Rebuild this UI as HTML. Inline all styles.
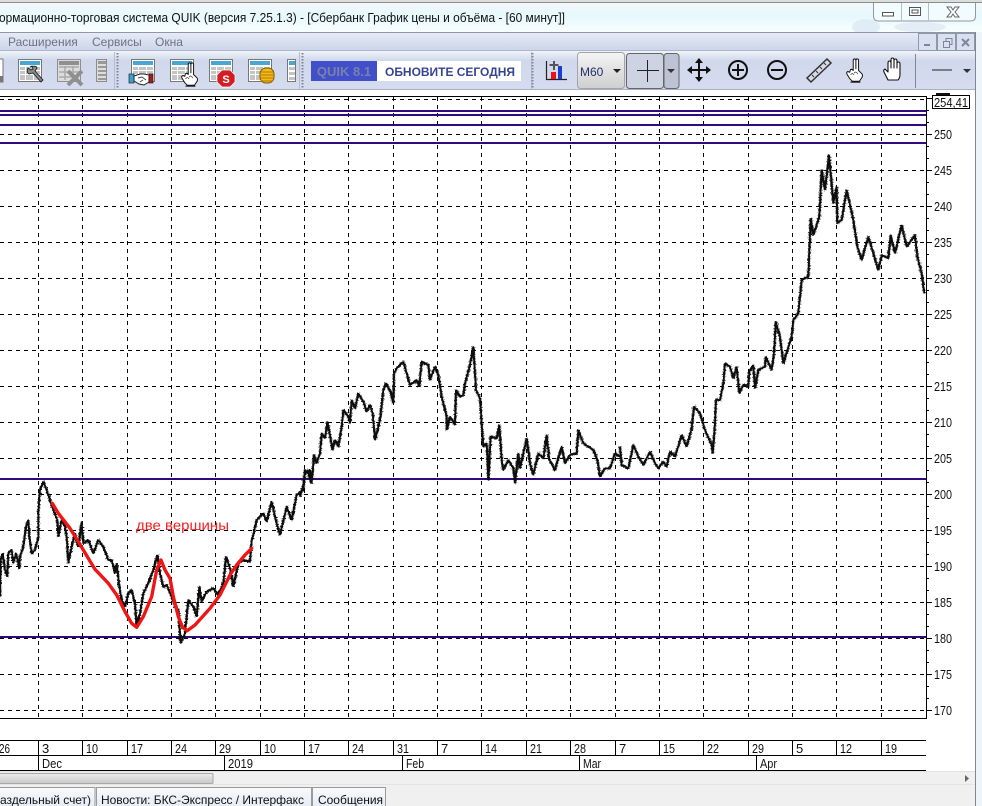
<!DOCTYPE html>
<html><head><meta charset="utf-8"><style>
html,body{margin:0;padding:0;background:#fff;overflow:hidden}
svg{display:block;font-family:"Liberation Sans",sans-serif}
.ax{font-size:13px;fill:#111}
</style></head><body>
<svg width="982" height="806" viewBox="0 0 982 806" xmlns="http://www.w3.org/2000/svg">
<defs>
<linearGradient id="tb" x1="0" y1="0" x2="0" y2="1"><stop offset="0" stop-color="#f4f8fb"/><stop offset=".5" stop-color="#e6f8fc"/><stop offset="1" stop-color="#fbfeff"/></linearGradient>
<linearGradient id="mn" x1="0" y1="0" x2="0" y2="1"><stop offset="0" stop-color="#e6ebf5"/><stop offset="1" stop-color="#ccd5ea"/></linearGradient>
<linearGradient id="tl" x1="0" y1="0" x2="0" y2="1"><stop offset="0" stop-color="#f0f3f9"/><stop offset=".25" stop-color="#d0d8ec"/><stop offset="1" stop-color="#d6dcee"/></linearGradient>
<linearGradient id="bt" x1="0" y1="0" x2="0" y2="1"><stop offset="0" stop-color="#f4f4f4"/><stop offset="1" stop-color="#cfcfcf"/></linearGradient>
<linearGradient id="sc" x1="0" y1="0" x2="0" y2="1"><stop offset="0" stop-color="#ececec"/><stop offset="1" stop-color="#c8c8c8"/></linearGradient>
<linearGradient id="tab" x1="0" y1="0" x2="0" y2="1"><stop offset="0" stop-color="#fafafa"/><stop offset="1" stop-color="#e4ecf6"/></linearGradient>
<filter id="rough" x="-2%" y="-2%" width="104%" height="104%" filterUnits="objectBoundingBox"><feTurbulence type="fractalNoise" baseFrequency="0.7" numOctaves="2" seed="7" result="n"/><feDisplacementMap in="SourceGraphic" in2="n" scale="4" xChannelSelector="R" yChannelSelector="G"/></filter>
<symbol id="tbl" viewBox="0 0 24 24" width="24" height="24"><rect x=".5" y=".5" width="23" height="22" fill="#fff" stroke="#777"/><rect x="2" y="2" width="20" height="4" fill="#4aa6d2"/><path d="M2 8h5v3H2zM8 8h7v3H8zM16 8h6v3h-6zM2 12h5v3H2zM8 12h7v3H8zM16 12h6v3h-6zM2 16h5v5H2zM8 16h7v5H8zM16 16h6v5h-6z" fill="#c4c4c4"/></symbol>
<symbol id="hand2" viewBox="0 0 20 28"><path d="M8 14V3q0-2 1.500-2T11 3v9V3q0-2 1.500-2T14 3v11l4 4q1 3-1 5l-2 3H7l-3-3-3-5q-1-2 1-3l2 1 1-3q2-1 3 1z" fill="#fff" stroke="#111" stroke-width="1.100" stroke-linejoin="round"/><path d="M5 19q2-3 4 0M9 17q2-3 4 1" stroke="#333" stroke-width=".8" fill="none"/><path d="M5 27h11" stroke="#111" stroke-width="1.300"/></symbol>
<g id="price">
<polyline transform="translate(0 470) scale(.33333)" points="0,380 2,270 8,250 15,300 22,320 25,250 35,240 40,280 48,250 58,295 60,260 70,230 78,170 85,150 88,200 95,250 105,240 115,200 115,125 120,60 130,35 140,60 150,90 160,120 172,150 175,200 185,150 195,170 200,200 205,280 215,230 225,190 235,230 245,155 250,220 265,210 280,250 295,210 310,230 325,270 335,270 345,310 350,280 358,350 365,390 375,410 385,370 395,360 405,400 410,470 420,430 430,370 445,340 460,300 472,255 480,310 490,350 500,345 515,380 525,410 535,420 542,520 555,490 565,390 580,410 590,440 598,350 605,395 620,365 640,355 655,375 670,340 678,260 690,295 700,350 715,280 730,270 750,275 755,215 770,150 790,130 800,155 815,95 830,160 840,195 860,110 875,150 890,75 910,60 915,10 930,0 935,40"/>
<polyline transform="translate(300 340) scale(.33333)" points="0,470 10,435 15,390 25,400 35,430 38,395 42,345 50,370 60,340 65,280 75,295 82,245 90,285 97,330 105,300 115,320 125,260 130,210 145,230 150,250 155,180 165,205 175,160 190,185 200,215 210,195 218,220 225,300 240,240 250,150 258,130 272,155 280,190 282,100 290,85 310,65 320,100 330,135 350,120 358,140 365,65 385,75 390,120 405,80 415,105 425,170 440,230 440,270 450,230 465,255 468,150 480,170 490,165 495,130 510,75 520,20 528,150 540,175 545,250 550,320 560,310 565,420 572,290 590,295 598,255 605,360 610,390 625,360 640,385 645,430 655,340 660,385 680,295 690,370 700,405 715,340 730,355 740,285 748,360 765,390 785,320 795,370 810,345 830,340 835,270 850,310 880,330 892,360 900,410 915,385 930,385 945,340 960,350"/>
<polyline transform="translate(620 140) scale(.33333)" points="0,920 5,975 25,985 40,915 55,950 70,975 90,935 105,970 115,985 130,965 140,980 150,935 165,950 185,885 200,920 215,865 222,800 240,820 255,870 275,915 278,940 285,850 288,780 300,780 310,730 315,670 330,680 340,715 350,680 358,760 370,735 385,740 388,695 400,675 405,745 415,690 435,680 437,650 455,690 460,655 463,625 467,545 480,590 490,670 515,590 520,540 535,520 545,420 565,410 572,235 580,285 598,230 605,90 615,150 627,45 640,190 650,140 652,250 665,240 680,150 700,240 712,320 725,360 745,290 760,340 775,390 785,345 805,355 812,285 825,340 845,255 860,320 885,285 892,350 905,400 913,460"/>
</g>
</defs>

<!-- title -->
<rect width="982" height="33" fill="url(#tb)"/>
<rect width="982" height="2" fill="#dcdcdc"/><rect y="2" width="982" height="1" fill="#8c8c8c"/>
<ellipse cx="866" cy="27" rx="14" ry="8" fill="#e0edf6"/><ellipse cx="920" cy="27" rx="26" ry="5" fill="#e2edf6"/>
<text x="-1" y="22" font-size="12.5" fill="#111" textLength="566" lengthAdjust="spacingAndGlyphs">ормационно-торговая система QUIK (версия 7.25.1.3) - [Сбербанк График цены и объёма - [60 минут]]</text>
<path d="M873.5 3v13q0 5 5 5h92q5 0 5-5V3" fill="#f2fbfe" stroke="#8f9aa4"/>
<path d="M901.5 3v18M928.5 3v18" stroke="#b4c0c8"/>
<rect x="882.5" y="12.500" width="11" height="3.500" fill="#fff" stroke="#555"/>
<rect x="909.5" y="7.500" width="11" height="8" fill="#fff" stroke="#555"/><rect x="912" y="10" width="6" height="3" fill="none" stroke="#555"/>
<path d="M947 7l4 0 2 3 2-3 4 0-4 5 4 5-4 0-2-3-2 3-4 0 4-5z" fill="#fff" stroke="#666"/>

<!-- right side outer frame -->
<rect x="975" y="32" width="7" height="774" fill="#eef5fa"/>
<rect y="32" width="975" height="1" fill="#8d97a6"/>
<rect x="975" y="32" width="1" height="774" fill="#7f8790"/>

<!-- menu -->
<rect y="33" width="975" height="17" fill="url(#mn)"/>
<rect y="50" width="975" height="1" fill="#aeb7c9"/>
<g font-size="12" fill="#6e7180"><text x="8" y="46">Расширения</text><text x="92" y="46">Сервисы</text><text x="155" y="46">Окна</text></g>
<g fill="#d9e1f1" stroke="#8f9aa8"><rect x="918.500" y="33.500" width="18" height="17"/><rect x="937.500" y="33.500" width="18" height="17"/><rect x="956.500" y="33.500" width="18" height="17"/></g>
<path d="M924 45h6" stroke="#7b8798" stroke-width="2"/>
<path d="M943.500 41.500h6v6h-6zM946 41v-2.500h6v6h-2" fill="none" stroke="#7b8798"/>
<path d="M962 39l7 7M969 39l-7 7" stroke="#7b8798" stroke-width="2"/>

<!-- toolbar -->
<rect y="51" width="975" height="38" fill="url(#tl)"/>
<rect y="89" width="975" height="1" fill="#a9b1c4"/>
<rect y="90" width="975" height="681" fill="#fff"/>
<path d="M114.500 52v37M299.500 52v37M531.500 52v37" stroke="#b6bdcf"/>
<path d="M117.500 53v36M302.500 53v36M532.500 53v36" stroke="#7e8796" stroke-dasharray="1.500 1.500" stroke-width="2"/>

<rect x="-21" y="59" width="24" height="23" fill="#fff" stroke="#777"/><rect x="-2" y="76" width="5" height="6" fill="#777"/>
<use href="#tbl" x="18" y="59"/>
<path d="M30 67q6-2 7 1l-2 3 8 9-2 2-8-9-4 1q-3-2-1-6l3 2 2-1-1-3z" fill="#8c8c8c" stroke="#222" stroke-width=".9"/>
<g opacity=".95"><rect x="57.500" y="59.500" width="23" height="22" fill="#ddd" stroke="#8c8c8c"/><rect x="59" y="61" width="20" height="4" fill="#8c8c8c"/><path d="M59 67h20M59 72h20M59 77h20M65 66v14M73 66v14" stroke="#a8a8a8" stroke-width="1.500"/><path d="M68 71l14 14M82 71L68 85" stroke="#8c8c8c" stroke-width="4"/></g>
<rect x="96.500" y="59.500" width="10" height="22" fill="#ddd" stroke="#8c8c8c"/><path d="M98 61h8v3h-8zM98 66h8v2h-8zM98 70h8v2h-8zM98 74h8v2h-8zM98 78h8v2h-8z" fill="#999"/>

<use href="#tbl" x="131" y="59"/>
<rect x="129" y="74" width="5" height="9" fill="#3d9fd0" stroke="#222" stroke-width=".7"/><rect x="149" y="74" width="4" height="9" fill="#b01818" stroke="#222" stroke-width=".7"/>
<path d="M134 76l6-2 4 0 5 1v7l-5 3-5-1-5-3z" fill="#fff" stroke="#222"/><path d="M138 78l4-1 4 3M140 82l3-2" stroke="#444" fill="none"/>
<use href="#tbl" x="170" y="59"/>
<use href="#hand2" x="181" y="62" width="18" height="25"/>
<use href="#tbl" x="209" y="59"/>
<path d="M222 70h8l5 5v7l-5 5h-8l-5-5v-7z" fill="#d51c22" stroke="#fff" stroke-width=".7"/><text x="226" y="83" font-size="11" font-weight="bold" fill="#fff" text-anchor="middle">S</text>
<use href="#tbl" x="248" y="59"/>
<rect x="260" y="68" width="14" height="15" rx="6" fill="#f3b918" stroke="#7a5a06"/><path d="M261 72h12M260 75h14M260 78h14M261 81h12" stroke="#b07c00"/>
<rect x="287.500" y="59.500" width="8" height="22" fill="#fff" stroke="#777"/><rect x="289" y="61" width="6" height="4" fill="#4aa6d2"/><path d="M289 67h6v3h-6zM289 72h6v3h-6zM289 77h6v3h-6z" fill="#c4c4c4"/>

<rect x="311" y="61" width="66" height="20" fill="#4150c9"/>
<text x="344" y="76" font-size="13" font-weight="bold" fill="#7b7fae" text-anchor="middle">QUIK 8.1</text>
<rect x="377" y="61" width="144" height="20" fill="#fff"/>
<text x="385" y="76" font-size="12" font-weight="bold" fill="#36458f" textLength="130" lengthAdjust="spacingAndGlyphs">ОБНОВИТЕ СЕГОДНЯ</text>

<path d="M546.500 61v18.500H567" stroke="#222" fill="none" stroke-width="1.200"/>
<rect x="551" y="72" width="5" height="7" fill="#e11"/><rect x="558" y="66" width="4" height="13" fill="#1a3fd0"/>
<path d="M554 61v9M549.500 65h9" stroke="#555" stroke-width="2"/>
<rect x="577.500" y="52.500" width="47" height="36" rx="3" fill="url(#bt)" stroke="#a4a4a4"/>
<text x="580" y="76" font-size="12" fill="#24306e">M60</text>
<path d="M613 69h8l-4 4z" fill="#222"/>
<rect x="626.500" y="53.500" width="37" height="35" rx="3" fill="#cdd3e2" stroke="#666"/>
<rect x="664" y="53.500" width="15" height="35" rx="3" fill="#bcc3d4" stroke="#666"/>
<path d="M647.500 60v22M637 70.500h22" stroke="#222"/>
<path d="M667 69h8l-4 4z" fill="#333"/>
<g fill="#111" stroke="none"><path d="M699 58l4 5h-3v6h6v-3l5 4-5 4v-3h-6v6h3l-4 5-4-5h3v-6h-6v3l-5-4 5-4v3h6v-6h-3z"/></g>
<g fill="none" stroke="#111" stroke-width="2"><circle cx="738" cy="70" r="9"/><path d="M732 70h12M738 64v12"/><circle cx="777" cy="70" r="9"/><path d="M771 70h12"/></g>
<path d="M807 78l20-19 4 4-20 19z" fill="#d6dae6" stroke="#333" stroke-width="1.500"/>
<path d="M812 75l2 2M816 71l2 2M820 67l2 2M824 63l2 2" stroke="#333"/>
<use href="#hand2" x="846" y="58" width="18" height="25"/>
<path d="M888 80l-4-8q-1-2 1-3l3 3v-9q0-2 1.500-2t1.500 2v5-8q0-2 1.500-2t1.500 2v8-7q0-2 1.500-2t1.500 2v7-4q0-2 1.500-2t1.500 2v10q0 4-2 6z" fill="#fff" stroke="#111" stroke-width="1.100" stroke-linejoin="round"/>
<path d="M915.500 54v34" stroke="#7e8796"/>
<path d="M932 70h20" stroke="#222"/>
<path d="M963 69h8l-4 4z" fill="#333"/>

<!-- chart grid -->
<g stroke="#000" stroke-dasharray="4 4" shape-rendering="crispEdges" fill="none">
<path d="M0 99.500H926M0 134.500H926M0 170.500H926M0 206.500H926M0 242.500H926M0 278.500H926M0 314.500H926M0 350.500H926M0 386.500H926M0 422.500H926M0 458.500H926M0 494.500H926M0 530.500H926M0 566.500H926M0 602.500H926M0 638.500H926M0 674.500H926M0 710.500H926"/>
<path d="M38.500 97V718M82.500 97V718M127.500 97V718M171.500 97V718M215.500 97V718M260.500 97V718M304.500 97V718M348.500 97V718M393.500 97V718M437.500 97V718M481.500 97V718M526.500 97V718M570.500 97V718M615.500 97V718M659.500 97V718M703.500 97V718M748.500 97V718M792.500 97V718M836.500 97V718M881.500 97V718"/>
</g>
<path d="M0 96.500H926.500V718.500H0" fill="none" stroke="#000" shape-rendering="crispEdges"/>

<!-- purple levels -->
<g fill="#32087a"><rect y="110" width="926" height="2"/><rect y="114" width="926" height="2"/><rect y="124" width="926" height="2"/><rect y="142" width="926" height="2"/><rect y="478" width="926" height="2"/><rect y="636" width="926" height="2"/></g>

<!-- price -->
<use href="#price" fill="none" stroke="#0a0a0a" stroke-width="5" stroke-linejoin="bevel"/>
<g filter="url(#rough)"><use href="#price" fill="none" stroke="#0a0a0a" stroke-width="7" stroke-linejoin="bevel"/></g>
<polyline transform="translate(0 470) scale(.33333)" fill="none" stroke="#f01414" stroke-width="10" stroke-linejoin="round" stroke-linecap="round" points="157,100 175,130 210,175 235,215 265,265 285,298 325,340 350,375 375,425 395,460 410,472 430,440 455,380 470,300 483,270 495,300 510,325 520,380 535,440 548,472 562,482 585,465 630,415 660,375 690,315 710,285 735,255 755,235"/>
<text x="136" y="530" font-size="13.500" fill="#f42020" textLength="93" lengthAdjust="spacingAndGlyphs">две вершины</text>

<!-- y axis -->
<path stroke="#000" shape-rendering="crispEdges" d="M926 134.500h6M926 170.500h6M926 206.500h6M926 242.500h6M926 278.500h6M926 314.500h6M926 350.500h6M926 386.500h6M926 422.500h6M926 458.500h6M926 494.500h6M926 530.500h6M926 566.500h6M926 602.500h6M926 638.500h6M926 674.500h6M926 710.500h6M926 98.500h6M926 110.500h3M926 122.500h3M926 146.500h3M926 158.500h3M926 182.500h3M926 194.500h3M926 218.500h3M926 230.500h3M926 254.500h3M926 266.500h3M926 290.500h3M926 302.500h3M926 326.500h3M926 338.500h3M926 362.500h3M926 374.500h3M926 398.500h3M926 410.500h3M926 434.500h3M926 446.500h3M926 470.500h3M926 482.500h3M926 506.500h3M926 518.500h3M926 542.500h3M926 554.500h3M926 578.500h3M926 590.500h3M926 614.500h3M926 626.500h3M926 650.500h3M926 662.500h3M926 686.500h3M926 698.500h3"/>
<g class="ax"><text x="934" y="139" class="ax" textLength="18" lengthAdjust="spacingAndGlyphs">250</text><text x="934" y="175" class="ax" textLength="18" lengthAdjust="spacingAndGlyphs">245</text><text x="934" y="211" class="ax" textLength="18" lengthAdjust="spacingAndGlyphs">240</text><text x="934" y="247" class="ax" textLength="18" lengthAdjust="spacingAndGlyphs">235</text><text x="934" y="283" class="ax" textLength="18" lengthAdjust="spacingAndGlyphs">230</text><text x="934" y="319" class="ax" textLength="18" lengthAdjust="spacingAndGlyphs">225</text><text x="934" y="355" class="ax" textLength="18" lengthAdjust="spacingAndGlyphs">220</text><text x="934" y="391" class="ax" textLength="18" lengthAdjust="spacingAndGlyphs">215</text><text x="934" y="427" class="ax" textLength="18" lengthAdjust="spacingAndGlyphs">210</text><text x="934" y="463" class="ax" textLength="18" lengthAdjust="spacingAndGlyphs">205</text><text x="934" y="499" class="ax" textLength="18" lengthAdjust="spacingAndGlyphs">200</text><text x="934" y="535" class="ax" textLength="18" lengthAdjust="spacingAndGlyphs">195</text><text x="934" y="571" class="ax" textLength="18" lengthAdjust="spacingAndGlyphs">190</text><text x="934" y="607" class="ax" textLength="18" lengthAdjust="spacingAndGlyphs">185</text><text x="934" y="643" class="ax" textLength="18" lengthAdjust="spacingAndGlyphs">180</text><text x="934" y="679" class="ax" textLength="18" lengthAdjust="spacingAndGlyphs">175</text><text x="934" y="715" class="ax" textLength="18" lengthAdjust="spacingAndGlyphs">170</text></g>
<rect x="932.500" y="95.500" width="37" height="13" fill="#fff" stroke="#000" shape-rendering="crispEdges"/>
<path d="M936 94h14" stroke="#111" stroke-width="2"/>
<text x="934" y="107" class="ax" textLength="34" lengthAdjust="spacingAndGlyphs">254,41</text>

<!-- time axis -->
<path fill="none" stroke="#000" shape-rendering="crispEdges" d="M0 740.500H926M0 755.500H926M0 770.500H926M38.500 740V755M82.500 740V755M127.500 740V755M171.500 740V755M215.500 740V755M260.500 740V755M304.500 740V755M348.500 740V755M393.500 740V755M437.500 740V755M481.500 740V755M526.500 740V755M570.500 740V755M615.500 740V755M659.500 740V755M703.500 740V755M748.500 740V755M792.500 740V755M836.500 740V755M881.500 740V755M38.500 755V770M224.500 755V770M402.500 755V770M579.500 755V770M756.500 755V770"/>
<g class="ax"><text x="-1" y="753" class="ax" textLength="11" lengthAdjust="spacingAndGlyphs">26</text><text x="42" y="753" class="ax">3</text><text x="86" y="753" class="ax" textLength="12" lengthAdjust="spacingAndGlyphs">10</text><text x="131" y="753" class="ax" textLength="12" lengthAdjust="spacingAndGlyphs">17</text><text x="175" y="753" class="ax" textLength="12" lengthAdjust="spacingAndGlyphs">24</text><text x="219" y="753" class="ax" textLength="12" lengthAdjust="spacingAndGlyphs">29</text><text x="264" y="753" class="ax" textLength="12" lengthAdjust="spacingAndGlyphs">10</text><text x="308" y="753" class="ax" textLength="12" lengthAdjust="spacingAndGlyphs">17</text><text x="352" y="753" class="ax" textLength="12" lengthAdjust="spacingAndGlyphs">24</text><text x="397" y="753" class="ax" textLength="12" lengthAdjust="spacingAndGlyphs">31</text><text x="441" y="753" class="ax">7</text><text x="485" y="753" class="ax" textLength="12" lengthAdjust="spacingAndGlyphs">14</text><text x="530" y="753" class="ax" textLength="12" lengthAdjust="spacingAndGlyphs">21</text><text x="574" y="753" class="ax" textLength="12" lengthAdjust="spacingAndGlyphs">28</text><text x="619" y="753" class="ax">7</text><text x="663" y="753" class="ax" textLength="12" lengthAdjust="spacingAndGlyphs">15</text><text x="707" y="753" class="ax" textLength="12" lengthAdjust="spacingAndGlyphs">22</text><text x="752" y="753" class="ax" textLength="12" lengthAdjust="spacingAndGlyphs">29</text><text x="796" y="753" class="ax">5</text><text x="840" y="753" class="ax" textLength="12" lengthAdjust="spacingAndGlyphs">12</text><text x="885" y="753" class="ax" textLength="12" lengthAdjust="spacingAndGlyphs">19</text>
<text x="42" y="768" class="ax" textLength="20" lengthAdjust="spacingAndGlyphs">Dec</text><text x="228" y="768" class="ax" textLength="25" lengthAdjust="spacingAndGlyphs">2019</text><text x="406" y="768" class="ax" textLength="18" lengthAdjust="spacingAndGlyphs">Feb</text><text x="583" y="768" class="ax" textLength="18" lengthAdjust="spacingAndGlyphs">Mar</text><text x="760" y="768" class="ax" textLength="17" lengthAdjust="spacingAndGlyphs">Apr</text></g>

<!-- bottom -->
<rect y="771" width="975" height="35" fill="#f0f0f0"/>
<rect y="771" width="975" height="1" fill="#e2e2e2"/>
<rect y="784" width="975" height="1" fill="#e4e4e4"/>
<rect x="-3" y="773.500" width="216" height="10" rx="1" fill="url(#sc)" stroke="#a8a8a8"/>
<path d="M965 775v7l4-3.500z" fill="#666"/>
<rect x="-3" y="787.500" width="98" height="20" fill="url(#tab)" stroke="#9a9a9a"/>
<rect x="96.500" y="787.500" width="215" height="20" fill="url(#tab)" stroke="#9a9a9a"/>
<rect x="312.500" y="787.500" width="73" height="20" fill="url(#tab)" stroke="#9a9a9a"/>
<g font-size="12" fill="#111"><text x="0" y="804" textLength="91">аздельный счет)</text><text x="101" y="804" textLength="203">Новости: БКС-Экспресс / Интерфакс</text><text x="318" y="804" textLength="65">Сообщения</text></g>
</svg>
</body></html>
